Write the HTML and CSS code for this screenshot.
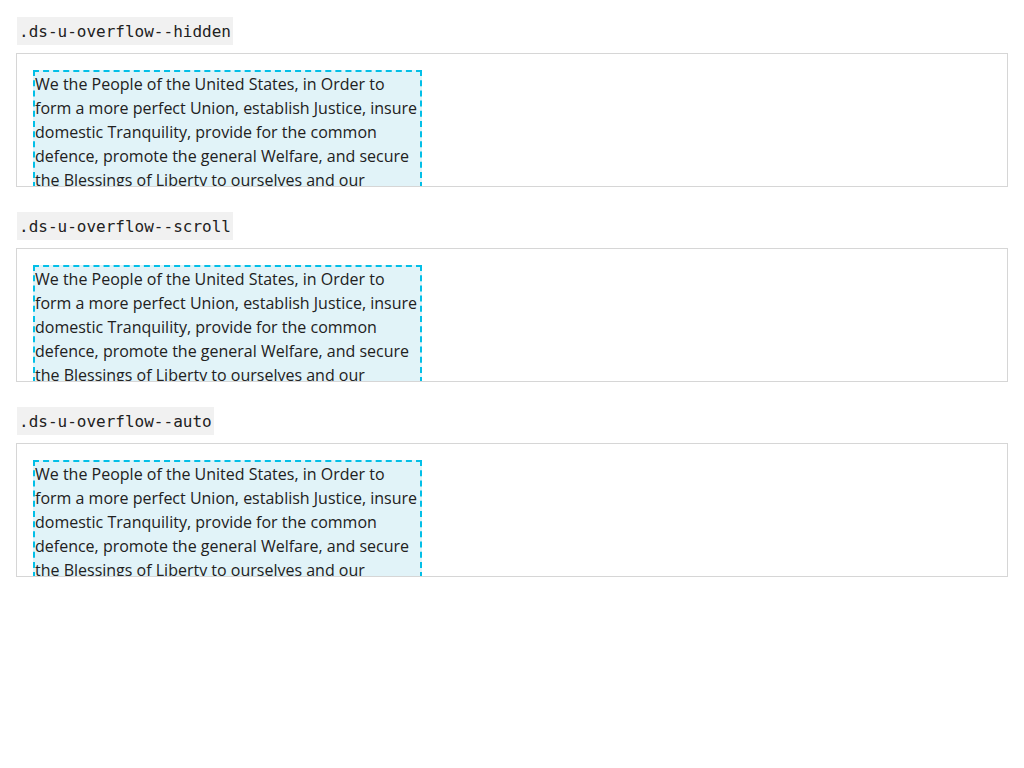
FILE: index.html
```html
<!DOCTYPE html>
<html lang="en">
<head>
<meta charset="utf-8">
<title>Overflow utilities</title>
<link rel="stylesheet" href="styles.css">
</head>
<body>
  <section class="example">
    <code class="label">.ds-u-overflow--hidden</code>
    <div class="frame">
      <div class="sample">We the People of the United States, in Order to form a more perfect Union, establish Justice, insure domestic Tranquility, provide for the common defence, promote the general Welfare, and secure the Blessings of Liberty to ourselves and our Posterity, do ordain and establish this Constitution for the United States of America.</div>
    </div>
  </section>
  <section class="example">
    <code class="label">.ds-u-overflow--scroll</code>
    <div class="frame">
      <div class="sample">We the People of the United States, in Order to form a more perfect Union, establish Justice, insure domestic Tranquility, provide for the common defence, promote the general Welfare, and secure the Blessings of Liberty to ourselves and our Posterity, do ordain and establish this Constitution for the United States of America.</div>
    </div>
  </section>
  <section class="example">
    <code class="label">.ds-u-overflow--auto</code>
    <div class="frame">
      <div class="sample">We the People of the United States, in Order to form a more perfect Union, establish Justice, insure domestic Tranquility, provide for the common defence, promote the general Welfare, and secure the Blessings of Liberty to ourselves and our Posterity, do ordain and establish this Constitution for the United States of America.</div>
    </div>
  </section>
</body>
</html>
```

FILE: styles.css
```css
html, body {
  background: #ffffff;
}
body {
  margin: 0;
  padding: 17px 16px 0 16px;
  font-family: "Open Sans", "Liberation Sans", sans-serif;
  color: #212121;
}
.example {
  display: flex;
  flex-direction: column;
  align-items: flex-start;
  margin-bottom: 25px;
}
.label {
  display: inline-block;
  margin-left: 1px;
  padding: 1px 2px 0 2px;
  background: #f1f1f1;
  font-family: "DejaVu Sans Mono", "Liberation Mono", monospace;
  font-size: 16px;
  line-height: 27px;
  color: #212121;
}
.frame {
  box-sizing: border-box;
  align-self: stretch;
  margin-top: 8px;
  height: 134px;
  padding: 16px 16px 0 16px;
  border: 1px solid #d6d6d6;
  overflow: hidden;
}
.sample {
  box-sizing: border-box;
  width: 389px;
  height: 220px;
  border: 2px dashed #02bfe7;
  background: #e1f3f8;
  font-size: 16px;
  line-height: 24px;
  color: #212121;
}
```
